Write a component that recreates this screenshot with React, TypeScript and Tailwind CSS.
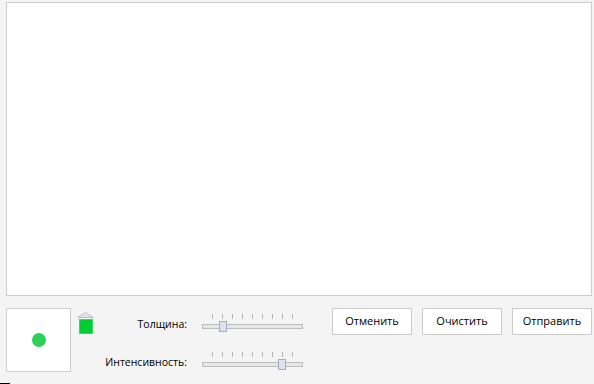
import React from 'react';

const font = { fontFamily: '"Open Sans", "Noto Sans", sans-serif' };

const ticks = [10, 20, 30, 40, 50, 60, 70, 80, 90];

function Slider({ value }: { value: number }) {
  return (
    <div className="relative w-[101px] h-[18px]">
      {ticks.map((t) => (
        <div key={t} className="absolute top-0 w-px h-[5px] bg-[#b5b5b5]" style={{ left: t }} />
      ))}
      <div className="absolute left-0 top-[10px] w-[101px] h-[5px] border border-[#bcbcbc] bg-[#e6e6e6]" />
      <div
        className="absolute top-[7px] w-[8px] h-[11px] border border-[#a7aebb] bg-[#dce3ec]"
        style={{ left: value }}
      />
    </div>
  );
}

function Row({ label, value }: { label: string; value: number }) {
  return (
    <div className="flex items-start">
      <div className="w-[93px] text-right text-[10.5px] leading-[14px] text-black pt-[3px]">{label}</div>
      <div className="ml-[15px]">
        <Slider value={value} />
      </div>
    </div>
  );
}

export default function App() {
  return (
    <div className="w-[594px] h-[384px] bg-[#f4f4f4] flex flex-col" style={font}>
      {/* Canvas */}
      <div className="ml-[6px] mt-[2px] w-[586px] h-[294px] border border-[#cdcdcd] bg-white" />

      {/* Controls */}
      <div className="flex items-start pl-[6px] pt-[12px]">
        <div className="w-[65px] h-[64px] border border-[#cdcdcd] bg-white flex items-center justify-center">
          <div className="w-[14px] h-[14px] rounded-full bg-[#2ed158]" />
        </div>

        <div className="ml-[6px] mt-[4px] w-[17px] flex flex-col items-center">
          <svg width="17" height="6" viewBox="0 0 17 6">
            <polygon points="8.5,0.5 16.5,5.5 0.5,5.5" fill="#e1e4ea" stroke="#b9bec8" strokeWidth="1" />
          </svg>
          <div className="mt-px w-[14px] h-[15px] bg-[#00cc33] border border-[#3ad85e]" />
        </div>

        <div className="flex flex-col gap-[20px] pt-[6px]">
          <Row label="Толщина:" value={17} />
          <Row label="Интенсивность:" value={76} />
        </div>

        <div className="ml-[29px] flex gap-[10px]">
          {['Отменить', 'Очистить', 'Отправить'].map((b) => (
            <button
              key={b}
              className="w-[80px] h-[27px] border border-[#cccccc] bg-white text-[11px] text-black"
            >
              {b}
            </button>
          ))}
        </div>
      </div>

      <div className="mt-auto w-[10px] h-px bg-black" />
    </div>
  );
}
